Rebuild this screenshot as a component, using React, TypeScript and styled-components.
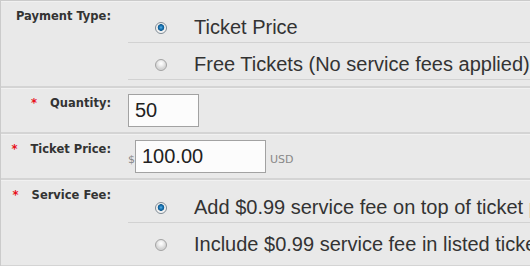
import React from "react";
import styled, { createGlobalStyle } from "styled-components";

const Global = createGlobalStyle`
  html, body { margin: 0; padding: 0; background: #e9e9e9; overflow: hidden; }
  body { width: 530px; height: 266px; }
`;

const Form = styled.div`
  width: 720px;
  background: #e9e9e9;
  border-top: 1px solid #cbcbcb;
  border-left: 1px solid #cbcbcb;
`;

const Row = styled.div<{ $pad?: string }>`
  display: grid;
  grid-template-columns: 127px 1fr;
  padding: ${(p) => p.$pad || "0"};
  border-bottom: 2px solid #d4d4d4;
  box-shadow: inset 0 1px 0 #f1f1f1;
`;

const Label = styled.div<{ $top?: number }>`
  padding: ${(p) => (p.$top ?? 9)}px 17px 0 0;
  text-align: right;
  font-family: "DejaVu Sans", Verdana, sans-serif;
  font-weight: bold;
  font-size: 11.5px;
  line-height: 13px;
  color: #333;
  white-space: nowrap;
`;

const Req = styled.span`
  color: #e8101a;
  margin-right: 13px;
`;

const Options = styled.div<{ $top: number; $bottom: number }>`
  padding-top: ${(p) => p.$top}px;
  padding-bottom: ${(p) => p.$bottom}px;
`;

const Option = styled.label<{ $plain?: boolean }>`
  display: flex;
  align-items: flex-start;
  box-sizing: border-box;
  height: ${(p) => (p.$plain ? 36 : 37)}px;
  padding-top: 10px;
  padding-left: 27px;
  border-bottom: ${(p) => (p.$plain ? "none" : "1px solid #d2d2d2")};
`;

const Radio = styled.span<{ $checked?: boolean }>`
  flex: none;
  width: 12px;
  height: 12px;
  margin-top: 6px;
  margin-right: 27px;
  border-radius: 50%;
  box-sizing: border-box;
  border: 1px solid ${(p) => (p.$checked ? "#7e8a94" : "#a3a3a3")};
  background: ${(p) =>
    p.$checked
      ? "radial-gradient(circle at 50% 45%, #5fb4e6 0, #1c78b8 1.6px, #0d5a90 3px, #e8e8e8 3.6px, #f7f7f7 5px)"
      : "radial-gradient(circle at 50% 35%, #ffffff 0, #f2f2f2 2px, #d6d6d6 5px)"};
`;

const OptionText = styled.span`
  font-family: "Liberation Sans", Arial, sans-serif;
  font-size: 20px;
  line-height: 23px;
  color: #333;
  white-space: nowrap;
`;

const Field = styled.div`
  display: flex;
  align-items: baseline;
`;

const Input = styled.input<{ $w: number }>`
  width: ${(p) => p.$w}px;
  height: 33px;
  box-sizing: border-box;
  border: 1px solid #a2a2a2;
  background: #fcfcfc;
  padding: 0 6px;
  margin: 0;
  font-family: "Liberation Sans", Arial, sans-serif;
  font-size: 20px;
  color: #222;
  outline: none;
`;

const Unit = styled.span<{ $gap?: number }>`
  font-family: "DejaVu Sans", Verdana, sans-serif;
  font-size: 11px;
  color: #888;
  margin-left: ${(p) => p.$gap || 0}px;
`;

export default function App() {
  return (
    <>
      <Global />
      <Form>
        <Row>
          <Label>Payment Type:</Label>
          <Options $top={5} $bottom={6}>
            <Option>
              <Radio $checked />
              <OptionText>Ticket Price</OptionText>
            </Option>
            <Option>
              <Radio />
              <OptionText>Free Tickets (No service fees applied)</OptionText>
            </Option>
          </Options>
        </Row>
        <Row $pad="6px 0 5px">
          <Label $top={3}>
            <Req>*</Req>Quantity:
          </Label>
          <Field>
            <Input $w={71} value="50" readOnly />
          </Field>
        </Row>
        <Row $pad="6px 0 5px">
          <Label $top={3}>
            <Req>*</Req>Ticket Price:
          </Label>
          <Field>
            <Unit>$</Unit>
            <Input $w={131} value="100.00" readOnly />
            <Unit $gap={4}>USD</Unit>
          </Field>
        </Row>
        <Row>
          <Label>
            <Req>*</Req>Service Fee:
          </Label>
          <Options $top={6} $bottom={6}>
            <Option>
              <Radio $checked />
              <OptionText>Add $0.99 service fee on top of ticket price</OptionText>
            </Option>
            <Option $plain>
              <Radio />
              <OptionText>Include $0.99 service fee in listed ticket price</OptionText>
            </Option>
          </Options>
        </Row>
      </Form>
    </>
  );
}
